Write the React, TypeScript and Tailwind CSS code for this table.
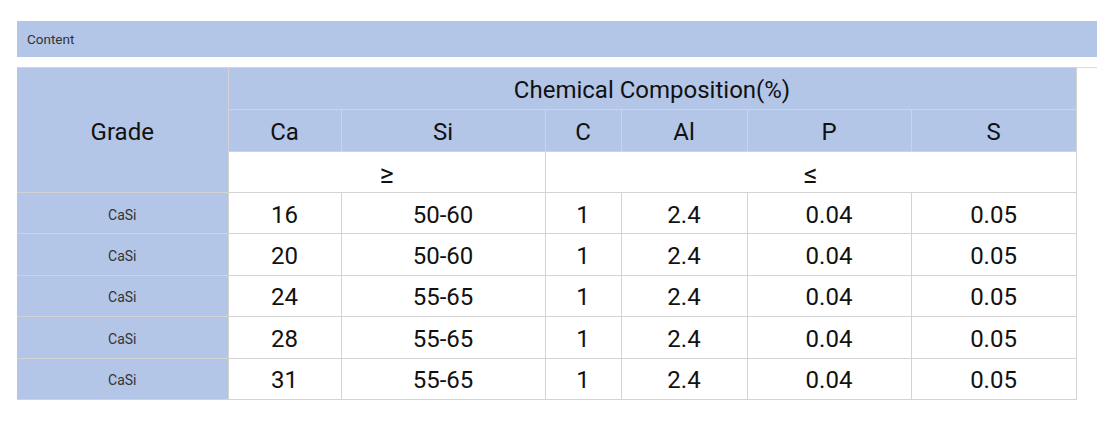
import React from 'react';

const rows = [
  { ca: '16', si: '50-60' },
  { ca: '20', si: '50-60' },
  { ca: '24', si: '55-65' },
  { ca: '28', si: '55-65' },
  { ca: '31', si: '55-65' },
];

const cell = 'border border-[#d3d3d3] text-center align-middle p-0 pt-[3px]';

export default function App() {
  return (
    <div className="min-h-[429px] bg-white pt-[21px] pl-[17px] pr-[11px] font-['Roboto',sans-serif] text-[#111]">
      <div className="flex h-[36px] items-center bg-[#b4c6e7] pl-[10px] text-[13.5px] text-[#333]">Content</div>
      <div className="mt-[10px] border-t border-[#dcdcdc]">
        <table className="w-[1059px] table-fixed border-collapse text-[24px] leading-[28px] -mt-px">
          <colgroup>
            <col className="w-[211px]" />
            <col className="w-[113px]" />
            <col className="w-[204px]" />
            <col className="w-[76px]" />
            <col className="w-[126px]" />
            <col className="w-[164px]" />
            <col className="w-[165px]" />
          </colgroup>
          <tbody>
            <tr className="h-[42px]">
              <td rowSpan={3} className={`${cell} border-l-0 bg-[#b4c6e7]`}>
                Grade
              </td>
              <td colSpan={6} className={`${cell} bg-[#b4c6e7]`}>
                Chemical Composition(%)
              </td>
            </tr>
            <tr className="h-[42px] bg-[#b4c6e7]">
              <td className={cell}>Ca</td>
              <td className={cell}>Si</td>
              <td className={cell}>C</td>
              <td className={cell}>Al</td>
              <td className={cell}>P</td>
              <td className={cell}>S</td>
            </tr>
            <tr className="h-[41px]">
              <td colSpan={2} className={`${cell} text-[27px]`}>
                ≥
              </td>
              <td colSpan={4} className={`${cell} text-[27px]`}>
                ≤
              </td>
            </tr>
            {rows.map((r, i) => (
              <tr key={i} className="h-[41.4px]">
                <td className={`${cell} border-l-0 bg-[#b4c6e7] text-[14px] leading-[16px] text-[#333]`}>CaSi</td>
                <td className={cell}>{r.ca}</td>
                <td className={cell}>{r.si}</td>
                <td className={cell}>1</td>
                <td className={cell}>2.4</td>
                <td className={cell}>0.04</td>
                <td className={cell}>0.05</td>
              </tr>
            ))}
          </tbody>
        </table>
      </div>
    </div>
  );
}
